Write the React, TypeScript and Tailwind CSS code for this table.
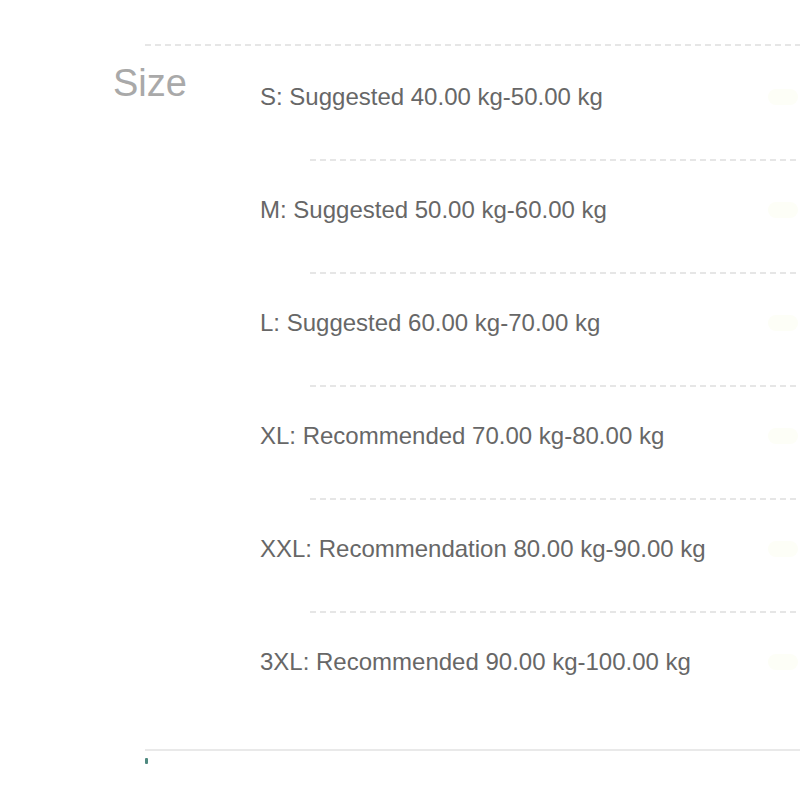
const rows = [
  "S: Suggested 40.00 kg-50.00 kg",
  "M: Suggested 50.00 kg-60.00 kg",
  "L: Suggested 60.00 kg-70.00 kg",
  "XL: Recommended 70.00 kg-80.00 kg",
  "XXL: Recommendation 80.00 kg-90.00 kg",
  "3XL: Recommended 90.00 kg-100.00 kg",
];

function Dashed({ className = "" }: { className?: string }) {
  return (
    <div
      className={`h-[2px] bg-[repeating-linear-gradient(to_right,#e6e6e6_0_6px,transparent_6px_10px)] ${className}`}
    />
  );
}

export default function App() {
  return (
    <main
      className="w-[800px] h-[800px] overflow-hidden bg-white pt-[44px]"
      style={{ fontFamily: '"Liberation Sans", Arial, sans-serif' }}
    >
      <Dashed className="ml-[145px]" />

      <div className="flex items-start pl-[113px]">
        <div className="w-[147px] shrink-0 mt-[18px] text-[38px] leading-none text-[#a9a9a9]">
          Size
        </div>

        <div className="flex-1 mt-[39px]">
          {rows.map((r, i) => (
            <div key={r}>
              <div className="relative h-[24px] text-[24px] leading-none text-[#676767] whitespace-nowrap">
                {r}
                <span className="absolute right-[2px] top-[4px] w-[30px] h-[16px] rounded-full bg-[#fdfef7]" />
              </div>
              {i < rows.length - 1 && (
                <>
                  <Dashed className="mt-[50px] ml-[50px]" />
                  <div className="h-[37px]" />
                </>
              )}
            </div>
          ))}
        </div>
      </div>

      <div className="mt-[75px] ml-[145px] h-[2px] bg-[#e9e9e9]" />
      <div className="ml-[145px] mt-[7px] w-[3px] h-[6px] bg-[#4f8a80] rounded-[1px]" />
    </main>
  );
}
